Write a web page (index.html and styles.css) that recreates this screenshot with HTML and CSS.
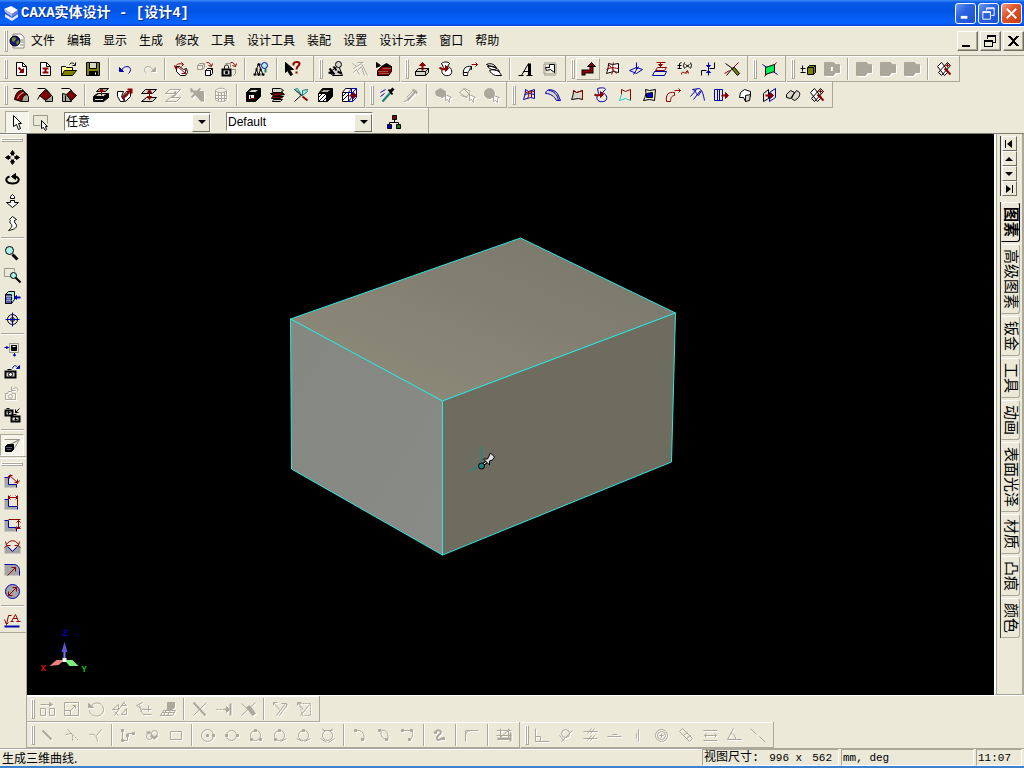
FILE: index.html
```html
<!DOCTYPE html>
<html lang="zh-CN">

<head>
    <meta charset="UTF-8">
    <meta name="viewport" content="width=device-width, initial-scale=1.0">
    <title>CAXA实体设计 - [设计4]</title>
    <link rel="stylesheet" href="styles.css">
</head>

<body>
    <!-- 标题栏 -->
    <header class="title">
        <svg class="logo" viewBox="0 0 16 16"><path fill="#fff" d="M1 4l7-3 7 4-6 4z"/><path fill="#b9b6ee" d="M1 4l8 5v3L2 7z"/><path fill="#7d78d8" d="M9 9l6-4v3l-6 4z"/><path fill="#e9e6ff" d="M2 9l7 4 6-4v3l-6 4-7-4z"/></svg>
        <h1>CAXA实体设计 - [设计4]</h1>
        <div class="winbtns">
            <button class="winbtn" aria-label="最小化"><svg viewBox="0 0 20 20"><path stroke-width="3" d="M5 14h7"/></svg></button>
            <button class="winbtn" aria-label="还原"><svg viewBox="0 0 20 20"><path d="M8 7V4h8v8h-3M8 5h8M4 8h8v8H4zM4 9h8"/></svg></button>
            <button class="winbtn close" aria-label="关闭"><svg viewBox="0 0 20 20"><path stroke-width="2" d="M5 5l10 10M15 5L5 15"/></svg></button>
        </div>
    </header>

    <!-- 菜单栏 -->
    <nav class="menu">
        <i class="grip"></i>
        <svg class="doc" viewBox="0 0 16 16"><path fill="#fff" stroke="#888" d="M4 1h8l3 3v11H4z"/><path stroke="#777" d="M12 7h2M12 9h2M11 12h3"/><circle cx="6" cy="8" r="5" fill="#17177c" stroke="#000"/><path fill="#7a8c1c" d="M3 5l3-1 1 2-2 3-2-1zM7 9l3-2v3l-2 2z"/></svg>
        <button>文件</button>
        <button>编辑</button>
        <button>显示</button>
        <button>生成</button>
        <button>修改</button>
        <button>工具</button>
        <button>设计工具</button>
        <button>装配</button>
        <button>设置</button>
        <button>设计元素</button>
        <button>窗口</button>
        <button>帮助</button>
        <div class="docbtns">
            <button aria-label="最小化文档"><svg viewBox="0 0 18 16"><path stroke-width="2" d="M4 13h8"/></svg></button>
            <button aria-label="还原文档"><svg viewBox="0 0 18 16"><path d="M6 6V2h8v7h-3M6 3h8M3 7h8v6H3zM3 8h8"/></svg></button>
            <button aria-label="关闭文档"><svg viewBox="0 0 18 16"><path stroke-width="2" d="M5 3l9 10M14 3L5 13"/></svg></button>
        </div>
    </nav>

    <!-- 工具条 第一行 -->
    <div class="bar">
        <div class="band wide">
            <i class="grip"></i>
            <button class="btn" aria-label="新建设计"><svg class="ico" viewBox="-.5 -.5 16 16"><path class="fw" d="M3 1h6l4 4v9H3z"/><path d="M9 1v4h4"/><path class="r" stroke-width="2" d="M5 6l4 4"/><path class="r fr" d="M10 7v4H6z"/></svg></button>
            <button class="btn" aria-label="新建图纸"><svg class="ico" viewBox="-.5 -.5 16 16"><path class="fw" d="M3 1h6l4 4v9H3z"/><path d="M9 1v4h4"/><path class="r" stroke-width="2" d="M5 7h6M8 7v4M5 11h6"/></svg></button>
            <button class="btn" aria-label="打开"><svg class="ico" viewBox="-.5 -.5 16 16"><path class="fy" d="M0 14V5h4l1 1h6v3"/><path class="fo" d="M0 14l3-5h12l-4 5z"/><path d="M8 3c1-2 4-2 5 0M14 1v3h-3"/></svg></button>
            <button class="btn" aria-label="保存"><svg class="ico" viewBox="-.5 -.5 16 16"><path class="fo" d="M1 1h13v13H1z"/><path class="fl" d="M4 1h7v6H4z"/><path class="fk" d="M4 10h8v4H4z"/><path stroke="#fff" d="M10 11v2"/></svg></button>
            <i class="sep"></i>
            <button class="btn" aria-label="撤销"><svg class="ico" viewBox="-.5 -.5 16 16"><path class="b" d="M4 9c2-5 9-5 9-1 0 2-1 3-2 4"/><path class="b fb" d="M2 6v4h4z"/></svg></button>
            <button class="btn" aria-label="重做" disabled><svg class="ico" viewBox="-.5 -.5 16 16"><path d="M12 9c-2-5-9-5-9-1 0 2 1 3 2 4"/><path class="fk" d="M14 6v4h-4z"/></svg></button>
            <i class="sep"></i>
            <button class="btn" aria-label="编辑零件"><svg class="ico" viewBox="-.5 -.5 16 16"><path class="fw" d="M3 5v5l4 4h5l2-3-1-4-3 1-4-3z"/><path class="r" d="M2 7c-1-4 4-6 8-4M4 5l8 7M8 12h4V8M1 4l1 3 3-1M8 1l2 2-2 2"/></svg></button>
            <button class="btn" aria-label="装配"><svg class="ico" viewBox="-.5 -.5 16 16"><path class="g" d="M0 4l2-2h5v4L5 8H0zM0 4h5v4M5 4l2-2"/><path class="fw" d="M8 9l2-2h5v5l-2 2H8z"/><path d="M8 9h5v5M13 9l2-2"/><path class="r" d="M9 1c3 0 4 1 5 4M11 4l3 1 1-3"/></svg></button>
            <button class="btn" aria-label="锁定"><svg class="ico" viewBox="-.5 -.5 16 16"><path class="g" d="M4 2h5v4M10 8h4v4l-2 2"/><path class="r" d="M9 1c3 0 4 1 5 4M11 4l3 1 1-3"/><path class="fl" stroke-width="2" d="M1 8h8v6H1z"/><path d="M3 7V5c0-2 4-2 4 0v2"/><path class="fk" d="M4 10h2v2H4z"/></svg></button>
            <i class="sep"></i>
            <button class="btn" aria-label="查找"><svg class="ico" viewBox="-.5 -.5 16 16"><path d="M5 2L1 14M5 2l5 12M3 8l2 6M7 8l-2 6"/><path d="M4 3h3M2 8h2M6 8h2M0 13h3M4 13h3M8 13h3" stroke-width="2"/><circle class="ft b" cx="11" cy="4" r="3"/><path class="t" stroke-width="2" d="M12 7v4"/></svg></button>
            <i class="sep"></i>
            <button class="btn" aria-label="帮助"><svg class="ico" viewBox="-.5 -.5 16 16"><path class="fk" d="M0 1v10l2-2 3 5 2-1-3-5h4z"/><path class="r" stroke-width="2" d="M8 4V2c1-2 6-2 6 0 0 3-3 2-3 6M11 10v2"/></svg></button>
        </div>
        <div class="band">
            <i class="grip"></i>
            <button class="btn" aria-label="智能渲染"><svg class="ico" viewBox="-.5 -.5 16 16"><path class="fl" d="M2 10l8-6 4 10H4z"/><circle class="fl" cx="10" cy="3" r="3"/><path stroke-width="2" d="M1 7l5 6M5 5l3 4M0 11l4 1M9 10l4 2"/></svg></button>
            <button class="btn" aria-label="渲染向导" disabled><svg class="ico" viewBox="-.5 -.5 16 16"><path d="M0 2l4 3M5 1h6M1 7l8-5 6 12M5 9l4-4 3 9M1 11l3-3 3 5"/></svg></button>
            <button class="btn" aria-label="材质库"><svg class="ico" viewBox="-.5 -.5 16 16"><path class="fr" d="M1 9l4-4h10v5l-3 4H1z"/><path class="fk" d="M0 1l4 3-4 2zM5 5l5-3 5 3z"/><path stroke="#c99" stroke-dasharray="1 1" d="M2 10h10M3 12h9M7 7h7"/></svg></button>
        </div>
        <div class="band">
            <i class="grip"></i>
            <button class="btn" aria-label="拉伸"><svg class="ico" viewBox="-.5 -.5 16 16"><path class="fl" d="M1 10l3-3h10v4l-3 3H1z"/><path d="M1 10h10v4M11 10l3-3"/><path class="r fr" d="M5 4l3-3 3 3z"/><path class="r" stroke-width="2" d="M8 4v5"/></svg></button>
            <button class="btn" aria-label="旋转"><svg class="ico" viewBox="-.5 -.5 16 16"><path class="fw" d="M3 2c2-2 7-2 8 0L9 5c5 1 6 8 1 9-5 1-8-3-6-7l1-1z"/><path class="r" stroke-width="2" d="M1 6c2 2 5 2 7 1"/><path class="r fr" d="M7 4l3 3-3 3z"/></svg></button>
            <button class="btn" aria-label="扫描"><svg class="ico" viewBox="-.5 -.5 16 16"><path class="fw" d="M1 14c-1-7 2-10 8-9v3c-3 0-4 3-4 6z"/><path d="M1 11h4M9 5l-2 3"/><path class="r" d="M9 3h6M13 1l2 2-2 2"/></svg></button>
            <button class="btn" aria-label="放样"><svg class="ico" viewBox="-.5 -.5 16 16"><path class="fw" d="M0 3c4-2 9 0 10 4-3-2-7-2-10-4zM1 5c5-1 9 0 12 5-4-2-9-1-12-5zM3 9c5-2 9-1 12 5H9c-3-1-5-3-6-5z"/></svg></button>
            <i class="sep"></i>
            <button class="btn" aria-label="文字"><svg class="ico" viewBox="-.5 -.5 16 16"><path d="M3 14l7-12M5 10h5M0 14h5M8 14h6"/><path stroke-width="3" d="M11 2v12"/></svg></button>
            <button class="btn" aria-label="轮廓"><svg class="ico" viewBox="-.5 -.5 16 16"><path class="g" stroke-width="3" stroke-dasharray="1 1" d="M2 2h11v11H2z"/><path class="fw" d="M3 6h4V3h5v8L8 8l-4 1z"/></svg></button>
        </div>
        <div class="band">
            <i class="grip"></i>
            <button class="btn up" aria-label="三维曲线"><svg class="ico" viewBox="-.5 -.5 16 16"><path stroke-width="4" d="M3 14v-4h8V5"/><path class="r" stroke-width="2" d="M3 13v-3h8V5"/><path class="fr" d="M7 5l4-4 4 4z"/></svg></button>
            <button class="btn" aria-label="曲面曲线"><svg class="ico" viewBox="-.5 -.5 16 16"><path class="fw" d="M4 2l4 1 6-1v9l-5-1-7 2c1-3 2-6 2-10z"/><path class="r" d="M9 1c-2 4 1 7-2 12M2 8l5-2 7 1M4 3l8 9"/></svg></button>
            <button class="btn" aria-label="投影曲线"><svg class="ico" viewBox="-.5 -.5 16 16"><path class="b" d="M8 1v7M1 9l7-3 6 2-6 4zM5 13l5-8"/></svg></button>
            <button class="btn" aria-label="等参数线"><svg class="ico" viewBox="-.5 -.5 16 16"><path class="r" d="M4 1h9M8 1v4M5 6h9l-2 3H3z"/><path class="r fr" d="M6 3h4L8 5z"/><path class="b" d="M2 10l-2 4h12l2-4z"/></svg></button>
            <button class="btn" aria-label="公式曲线"><svg class="ico" viewBox="-.5 -.5 16 16"><path d="M3 7V2l2-1M1 4h4M1 7h4M8 1L7 4l1 3M14 1l1 3-1 3M9 3l4 3M13 3L9 6"/><path class="r" d="M5 13c0-6 5 2 6-3M9 11l2-2 1 3"/></svg></button>
            <button class="btn" aria-label="组合曲线"><svg class="ico" viewBox="-.5 -.5 16 16"><path d="M1 14V9h5M9 7h5V1"/><path class="b" d="M8 1v13"/><path class="b fb" d="M6 4h4L8 6zM6 11h4l-2-2z"/></svg></button>
            <button class="btn" aria-label="裁剪曲线"><svg class="ico" viewBox="-.5 -.5 16 16"><path d="M1 2l14 10M2 14l5-6"/><path class="r" d="M7 8l7-7M0 12l5-3"/><path class="fo" d="M7 7l3-1 5 6-2 2z"/></svg></button>
        </div>
        <div class="band">
            <i class="grip"></i>
            <button class="btn" aria-label="基准面"><svg class="ico" viewBox="-.5 -.5 16 16"><path class="b" d="M0 3l15 10"/><path class="r" d="M2 15L14 1"/><path fill="#0e5" d="M3 6l9-3v7l-9 3z"/></svg></button>
        </div>
        <div class="band">
            <i class="grip"></i>
            <button class="btn" aria-label="布尔运算"><svg class="ico" viewBox="-.5 -.5 16 16"><path d="M0 7h5M2 4v6M0 11h5"/><path class="fo" d="M7 6l2-2h6v7l-2 2H7z"/><path d="M7 6h6v7M13 6l2-2"/></svg></button>
            <button class="btn" aria-label="相减" disabled><svg class="ico" viewBox="-.5 -.5 16 16"><path class="fk" fill-rule="evenodd" d="M0 1h9l2 2h4v8h-4l-2 3H0zM6 5v5h3V5z"/></svg></button>
            <i class="sep"></i>
            <button class="btn" aria-label="并集" disabled><svg class="ico" viewBox="-.5 -.5 16 16"><path class="fk" d="M0 1h10l2 2h3v8h-4l-2 3H0z"/></svg></button>
            <button class="btn" aria-label="交集" disabled><svg class="ico" viewBox="-.5 -.5 16 16"><path class="fk" d="M0 1h10l2 2h3v8h-4l-2 3H0z"/></svg></button>
            <button class="btn" aria-label="差集" disabled><svg class="ico" viewBox="-.5 -.5 16 16"><path class="fk" d="M0 1h10l2 2h3v8h-4l-2 3H0z"/></svg></button>
            <i class="sep"></i>
            <button class="btn" aria-label="特征识别"><svg class="ico" viewBox="-.5 -.5 16 16"><path class="fw" d="M1 5l4-4 7 9-4 4z"/><path d="M2 11l9-10 3 3L5 14z"/><path class="r" d="M9 4h4M11 2v4"/><path class="r" stroke-width="2" d="M8 7l6 6"/></svg></button>
        </div>
    </div>

    <!-- 工具条 第二行 -->
    <div class="bar">
        <div class="band">
            <i class="grip"></i>
            <button class="btn" aria-label="圆角过渡"><svg class="ico" viewBox="-.5 -.5 16 16"><path class="fg" d="M9 2l6 7v5H8z"/><path class="fr" d="M1 12c1-5 3-9 7-9l6 4c-4 0-5 3-6 7z"/><path d="M0 1h8"/><path stroke="#f0d0c8" d="M4 11c1-3 3-5 6-6"/></svg></button>
            <button class="btn" aria-label="倒角"><svg class="ico" viewBox="-.5 -.5 16 16"><path class="fg" d="M9 2l6 7v5H8z"/><path class="fr" d="M2 8l6-6 6 6-6 5z"/><path d="M0 1h8M0 12l3-5"/></svg></button>
            <button class="btn" aria-label="面拔模"><svg class="ico" viewBox="-.5 -.5 16 16"><path class="fg" d="M1 6l4 1 5 7H1z"/><path class="fr" d="M5 7l4-4 6 5-5 5z"/><path d="M0 1h8l3 3M4 8v6"/></svg></button>
            <i class="sep"></i>
            <button class="btn" aria-label="拉伸面"><svg class="ico" viewBox="-.5 -.5 16 16"><path class="fk" d="M0 9l4-3h11v4l-5 4H0z"/><path class="fl" d="M1 9l4-3h9l-4 3zM1 11h9v2H1z"/><path class="fg" d="M3 4l3-3h9l-3 3z"/><path class="r" d="M8 2v6"/><path class="r fr" d="M6 4l2-3 2 3z"/></svg></button>
            <button class="btn" aria-label="移动面"><svg class="ico" viewBox="-.5 -.5 16 16"><path class="fw" d="M0 4h6l-2 5 3 5H3L0 9zM5 9l4-5h4v5l-5 5z"/><path stroke-dasharray="1 1" d="M6 9l5-4M7 11l5-5"/><path class="r" stroke-width="2" d="M5 11l9-9M10 2h4v4"/></svg></button>
            <button class="btn" aria-label="匹配面"><svg class="ico" viewBox="-.5 -.5 16 16"><path class="fl" d="M4 2h11l-4 4H0zM5 10h10l-4 4H0z"/><path class="r" d="M8 2v10"/><path class="r fr" d="M6 5l2-3 2 3zM6 9l2 3 2-3z"/></svg></button>
            <button class="btn" aria-label="偏移面" disabled><svg class="ico" viewBox="-.5 -.5 16 16"><path d="M4 2h11l-4 4H0zM5 10h10l-4 4H0z"/><path stroke-width="2" d="M9 4c3 2 0 5-3 5"/></svg></button>
            <button class="btn" aria-label="删除面" disabled><svg class="ico" viewBox="-.5 -.5 16 16"><path class="fk" d="M8 4h6v10L8 9z"/><path stroke-width="2" d="M1 1l12 13M11 1L2 10M1 4h6"/></svg></button>
            <button class="btn" aria-label="编辑半径" disabled><svg class="ico" viewBox="-.5 -.5 16 16"><path d="M2 3c2-3 9-3 11 0v9c-2 3-9 3-11 0zM2 3c2 3 9 3 11 0M5 5v9M8 5v9M11 5v9M2 8h11M2 11h11"/></svg></button>
            <i class="sep"></i>
            <button class="btn" aria-label="抽壳"><svg class="ico" viewBox="-.5 -.5 16 16"><path class="fk" d="M1 5l4-4h10v8l-5 5H1z"/><path class="fl" d="M2 5l4-3h8l-4 3z"/><path class="fw" d="M3 7h6v5H3z"/><path class="r" d="M5 8v3h4"/></svg></button>
            <button class="btn" aria-label="分割"><svg class="ico" viewBox="-.5 -.5 16 16"><path class="fl" d="M3 1h8l3 2-3 2H3z"/><path class="fr" d="M1 6l12-1 2 2L5 9zM3 9h11l-3 2H2z"/><path class="fl" d="M4 12h9l-2 2H3z"/></svg></button>
            <button class="btn" aria-label="裁剪"><svg class="ico" viewBox="-.5 -.5 16 16"><path d="M1 14L14 2M1 2l7 6"/><path class="t ft" d="M9 3l4-1 1 2-5 4zM1 2l3-1 3 5z"/><path class="r" stroke-width="2" d="M9 9l5 4"/></svg></button>
            <button class="btn" aria-label="截面"><svg class="ico" viewBox="-.5 -.5 16 16"><path class="fk" d="M1 6l4-5h10v8l-5 5H1z"/><path class="fg" d="M2 5l4-3h8l-4 3z"/><path class="fw" d="M1 6h8v8H1z"/><path d="M1 10l4-4M1 14l8-8M5 14l4-4"/></svg></button>
            <button class="btn" aria-label="拉伸零件"><svg class="ico" viewBox="-.5 -.5 16 16"><path class="fw" d="M1 5l3-4h6v9l-3 4H1z"/><path d="M1 5h6v9M1 9l4-4M1 13l6-6"/><path class="b" d="M7 5l3-4h5v9l-4 4H7zM7 5h4v9M11 5l4-4"/><path class="r" stroke-width="2" d="M8 8h5"/><path class="r fr" d="M12 5l3 3-3 3z"/></svg></button>
        </div>
        <div class="band">
            <i class="grip"></i>
            <button class="btn" aria-label="提取效果"><svg class="ico" viewBox="-.5 -.5 16 16"><path class="b" d="M1 5l5-3M1 9l4-3"/><path class="t" d="M3 14l8-9" stroke-width="2"/><path stroke-width="3" d="M11 4l3-3"/><path stroke-width="2" d="M9 2l4 5"/></svg></button>
            <button class="btn" aria-label="应用效果" disabled><svg class="ico" viewBox="-.5 -.5 16 16"><path d="M3 10l8-8M0 14l4-1 1-3"/><path stroke-width="2" d="M9 2l5 4M4 13l9-10"/></svg></button>
            <i class="sep"></i>
            <button class="btn" aria-label="选择零件" disabled><svg class="ico" viewBox="-.5 -.5 16 16"><path class="fk" d="M0 4l5-3 5 3v4l-3 2-6-2z"/><path class="fw" d="M10 7v6l2-1 2 3v-4l2-1z"/></svg></button>
            <button class="btn" aria-label="选择面" disabled><svg class="ico" viewBox="-.5 -.5 16 16"><path d="M0 5l5-4 6 3-4 6zM4 1l7 7M1 8l7 2"/><path class="fw" d="M10 7v6l2-1 2 3v-4l2-1z"/></svg></button>
            <button class="btn" aria-label="选择体" disabled><svg class="ico" viewBox="-.5 -.5 16 16"><circle class="fk" cx="6" cy="6" r="5"/><path class="fw" d="M10 8v6l2-1 2 2v-4l2-1z"/></svg></button>
        </div>
        <div class="band">
            <i class="grip"></i>
            <button class="btn" aria-label="网格面"><svg class="ico" viewBox="-.5 -.5 16 16"><path class="b" d="M4 2l3 2 6-2v9l-4-1-7 2c1-3 2-6 2-10zM3 7l5-1 5 1"/><path class="r" d="M7 4c1 2 0 5-1 7M10 3v7M4 5l9-1"/></svg></button>
            <button class="btn" aria-label="放样面"><svg class="ico" viewBox="-.5 -.5 16 16"><path class="b fl" d="M0 6c1-6 9-4 12 0l3 7h-4C9 9 5 6 0 6z"/><path class="b" d="M3 3c5 0 9 4 10 10"/></svg></button>
            <button class="btn" aria-label="直纹面"><svg class="ico" viewBox="-.5 -.5 16 16"><path class="fl" d="M4 3l3 2 6-2v9l-4-1-7 1c1-2 2-6 2-9z"/><path class="r" d="M4 3l3 2 6-2v9"/></svg></button>
            <button class="btn" aria-label="旋转面"><svg class="ico" viewBox="-.5 -.5 16 16"><path class="b" d="M4 1c3-1 8-1 8 1l-3 3c5 2 6 8 1 9-5 1-8-2-6-6l1-2z"/><path class="r" stroke-width="2" d="M1 7c2 1 5 1 6 0"/><path class="r fr" d="M7 4l3 3-3 3z"/></svg></button>
            <button class="btn" aria-label="边界面"><svg class="ico" viewBox="-.5 -.5 16 16"><path class="r" d="M4 7V2l4 2 5-2v11"/><path stroke="#2cc" d="M4 7l-2 6 6-2 5 2"/></svg></button>
            <button class="btn" aria-label="补洞"><svg class="ico" viewBox="-.5 -.5 16 16"><path d="M4 2l4 1 6-1-1 11-5-1-6 1c2-4 3-7 2-11z"/><path class="fb" d="M5 6l6-1v5H5z"/></svg></button>
            <button class="btn" aria-label="导动面"><svg class="ico" viewBox="-.5 -.5 16 16"><path class="r" d="M1 14c-1-7 2-10 8-9v3c-3 0-4 3-4 6zM9 3h6M13 1l2 2-2 2"/></svg></button>
            <button class="btn" aria-label="曲面过渡"><svg class="ico" viewBox="-.5 -.5 16 16"><path class="b" d="M3 2l7-1c3 2 4 7 5 12M3 2c4 1 3 5 6 6M1 9l6-7M4 12l7-9M9 8l3-5"/></svg></button>
            <button class="btn" aria-label="曲面延伸"><svg class="ico" viewBox="-.5 -.5 16 16"><path class="b" d="M1 2h8v11H1zM4 2v11M6 2v11"/><path class="r" stroke-width="2" d="M8 8h4"/><path class="r fr" d="M12 5l3 3-3 3z"/></svg></button>
            <button class="btn" aria-label="偏移曲面"><svg class="ico" viewBox="-.5 -.5 16 16"><path class="fw" d="M3 5l4-3 6 2v5c-3 0-4 2-5 5l-2-4H2z"/><path class="fl" d="M8 8l5-1-1 6-4 1z"/></svg></button>
            <button class="btn" aria-label="缝合"><svg class="ico" viewBox="-.5 -.5 16 16"><path d="M2 6l5-4v9l-5 3z"/><path class="b" d="M8 5l6-4v9l-6 4z"/><path class="r" stroke-width="2" d="M4 8h5"/><path class="r fr" d="M9 5l3 3-3 3z"/></svg></button>
            <button class="btn" aria-label="合并曲面"><svg class="ico" viewBox="-.5 -.5 16 16"><path class="fl" d="M1 7l4-4 4 2-4 6-4-1zM8 7l3-4 3 2c1 3-1 6-5 8l-3-2z"/></svg></button>
            <button class="btn" aria-label="裁剪曲面"><svg class="ico" viewBox="-.5 -.5 16 16"><path class="fw" d="M1 5l4-4 7 9-4 4z"/><path d="M2 11l9-10 3 3L5 14z"/><path class="r" d="M9 4h4M11 2v4"/><path class="r" stroke-width="2" d="M8 7l6 6"/></svg></button>
        </div>
    </div>

    <!-- 选择过滤 -->
    <div class="bar">
        <div class="band filter">
            <button class="btn down" aria-label="选择"><svg class="ico" viewBox="-.5 -.5 16 16"><path class="fw" d="M4 1v11l3-2 2 5 2-1-2-5h3z"/></svg></button>
            <button class="btn" aria-label="框选"><svg class="ico" viewBox="-.5 -.5 16 16"><path class="g" d="M7 11H0V1h14v8"/><path class="fw" d="M8 6v8l2-1 2 3 1-1-1-3h2z"/></svg></button>
            <label class="combo">
                <select aria-label="选择过滤">
                    <option>任意</option>
                </select>
            </label>
            <label class="combo">
                <select aria-label="配置">
                    <option>Default</option>
                </select>
            </label>
            <button class="btn" aria-label="配置管理"><svg class="ico" viewBox="-.5 -.5 16 16"><path d="M8 5v3M3 11V8h9v3"/><path class="fr" d="M6 1h4v4H6z"/><path class="fb" d="M1 10h4v4H1z"/><path fill="#1a7a1a" d="M10 10h4v4h-4z"/></svg></button>
        </div>
    </div>

    <main class="main">
        <!-- 左侧工具条 -->
        <aside class="side">
            <div class="vband">
                <i class="grip"></i>
                <button class="btn" aria-label="平移"><svg class="ico" viewBox="-.5 -.5 16 16"><path class="fk" d="M8 1l2 3H6zM8 15l2-3H6zM1 8l3-2v4zM15 8l-3-2v4z"/><path stroke-width="3" d="M8 4v2M8 10v2M4 8h2M10 8h2"/></svg></button>
                <button class="btn" aria-label="旋转视图"><svg class="ico" viewBox="-.5 -.5 16 16"><path stroke-width="2" d="M5 5C-1 7 2 12 8 12s9-5 3-7"/><path class="fk" d="M7 5l4-3v6z"/></svg></button>
                <button class="btn" aria-label="前后缩放"><svg class="ico" viewBox="-.5 -.5 16 16"><path class="fw" d="M6 5V3l2-2 2 2v2zM6 7h4v2h4l-6 5-6-5h4z"/></svg></button>
                <button class="btn" aria-label="任意视向"><svg class="ico" viewBox="-.5 -.5 16 16"><path class="fw" d="M5 4l3-3 4 3-2 1c-1 2 2 3 2 5 0 3-3 4-8 5 3-3 4-4 3-6-2-2-2-3-1-4z"/></svg></button>
                <i class="sep"></i>
                <button class="btn" aria-label="动态缩放"><svg class="ico" viewBox="-.5 -.5 16 16"><circle class="ft" cx="5" cy="5" r="4"/><path stroke-width="3" d="M8 9l5 5"/></svg></button>
                <button class="btn" aria-label="窗口缩放"><svg class="ico" viewBox="-.5 -.5 16 16"><path class="g" d="M6 9H0V1h10v3"/><circle class="ft" cx="9" cy="8" r="3"/><path stroke-width="2" d="M11 10l5 5"/></svg></button>
                <button class="btn" aria-label="指定面"><svg class="ico" viewBox="-.5 -.5 16 16"><path class="ft" d="M1 5l3-3h6v8l-3 4H1z"/><path fill="#5560b0" d="M1 5h6v9H1z"/><path stroke="#cde" stroke-dasharray="1 1" d="M2 7h5M3 9h4M2 11h5"/><path class="b" stroke-width="2" d="M12 8h4"/><path class="b fb" d="M12 6v4l-2-2z"/></svg></button>
                <button class="btn" aria-label="指定中心"><svg class="ico" viewBox="-.5 -.5 16 16"><circle cx="8" cy="8" r="5"/><circle cx="8" cy="8" r="2"/><path class="b" d="M8 1v14M1 8h14"/></svg></button>
                <i class="sep"></i>
                <button class="btn" aria-label="全屏显示"><svg class="ico" viewBox="-.5 -.5 16 16"><path class="g" d="M5 2h9v9H5z"/><path class="fk" d="M7 4h5v5H7z"/><path stroke="#fff" d="M8 5h3"/><path class="b" d="M0 6h4M10 15v-3"/><path class="b fb" d="M2 5v2l2-1zM9 14h2l-1-2z"/></svg></button>
                <button class="btn" aria-label="保存视向"><svg class="ico" viewBox="-.5 -.5 16 16"><path class="fl" stroke-width="2" d="M1 8h10v6H1z"/><path d="M3 6h4"/><circle class="fw" cx="6" cy="11" r="2"/><path class="b" d="M8 5c1-4 4-3 5-1"/><path class="b fb" d="M15 2v3h-3z"/></svg></button>
                <button class="btn" aria-label="恢复视向" disabled><svg class="ico" viewBox="-.5 -.5 16 16"><path d="M1 8h2l1-2h3l1 2h3v6H1z"/><circle cx="6" cy="11" r="2"/><path d="M13 6c2-4-3-5-5-2M7 1v4h4"/></svg></button>
                <button class="btn" aria-label="取消视向"><svg class="ico" viewBox="-.5 -.5 16 16"><path class="fl" stroke-width="2" d="M1 3h7v5H1zM7 9h8v5H7z"/><path d="M2 1h3M9 7h3M4 4v3M3 5h3M11 10v3M10 12h3M11 5l4-4M11 2v3h3"/></svg></button>
                <i class="sep"></i>
                <button class="btn down" aria-label="透视"><svg class="ico" viewBox="-.5 -.5 16 16"><path class="g" d="M0 2h15L3 8M15 2L9 12M15 2L5 8"/><path class="fk" d="M1 9l2-2h6v5l-2 2H1z"/><path stroke="#aaf" stroke-dasharray="1 1" d="M2 10h5M3 12h4"/></svg></button>
            </div>
            <div class="vband">
                <i class="grip"></i>
                <button class="btn" aria-label="智能尺寸"><svg class="ico" viewBox="-.5 -.5 16 16"><path class="fd" d="M0 4h4v7h8v3H0z" stroke="none"/><path class="b" d="M0 4h4v7h8v3"/><path class="r" d="M5 2l8 7M5 5V2h3M10 9h3V6M3 4l3-3M12 11l3-4"/></svg></button>
                <button class="btn" aria-label="水平尺寸"><svg class="ico" viewBox="-.5 -.5 16 16"><path class="fd" d="M0 4h4v7h9v3H0z" stroke="none"/><path class="b" d="M0 4h4v7h9v3"/><path class="r" d="M4 0v5M13 0v11M4 2h9M6 0L4 2l2 2M11 0l2 2-2 2"/></svg></button>
                <button class="btn" aria-label="垂直尺寸"><svg class="ico" viewBox="-.5 -.5 16 16"><path class="fd" d="M0 3h4v7h8v4H0z" stroke="none"/><path class="b" d="M0 3h4v7h8v4"/><path class="r" d="M4 2h12M11 11h5M14 3v8M12 5l2-2 2 2M12 9l2 2 2-2"/></svg></button>
                <button class="btn" aria-label="角度尺寸"><svg class="ico" viewBox="-.5 -.5 16 16"><path class="fd" d="M0 7h4l4 4 4-4h4v7H0z" stroke="none"/><path class="b" d="M3 7l5 5 5-5"/><path class="r" d="M2 5c3-5 9-5 12 0M1 2l1 4h4M15 2l-1 4h-4M0 8l3-2M16 8l-3-2"/></svg></button>
                <button class="btn" aria-label="半径尺寸"><svg class="ico" viewBox="-.5 -.5 16 16"><path class="fd" d="M0 3h9c4 0 6 3 6 6v5H0z" stroke="none"/><path class="b" d="M0 3h9c4 0 6 3 6 6v5"/><path class="r" d="M3 14l8-8M7 6h4v4"/></svg></button>
                <button class="btn" aria-label="直径尺寸"><svg class="ico" viewBox="-.5 -.5 16 16"><circle class="fd b" cx="8" cy="8" r="7"/><path class="r" d="M4 12l8-8M8 4h4v4M4 8v4h4"/></svg></button>
                <i class="sep"></i>
                <button class="btn" aria-label="文字注释"><svg class="ico" viewBox="-.5 -.5 16 16"><path class="r" d="M7 8l4-7 3 7M6 8h3M12 8h4M9 5h4M7 2H4L2 11M0 6l2 5 2-2"/><path class="b" stroke-width="2" d="M0 13h15"/></svg></button>
            </div>
        </aside>

        <div class="center">
            <div class="work">
                <!-- 三维设计环境 -->
                <section class="canvas">
                    <svg viewBox="-.5 -.5 967 560">
                        <defs>
                            <linearGradient id="top" x1="0" y1="1" x2="1" y2="0">
                                <stop offset="0" stop-color="#918d7c"/>
                                <stop offset="1" stop-color="#77756a"/>
                            </linearGradient>
                            <linearGradient id="left" x1="0" y1="0" x2="1" y2="1">
                                <stop offset="0" stop-color="#858881"/>
                                <stop offset="1" stop-color="#888b86"/>
                            </linearGradient>
                        </defs>
                        <g class="box">
                            <path fill="url(#top)" d="M263 184l230-81 155 75-233 88z"/>
                            <path fill="url(#left)" d="M263 184l152 82v154l-151-86z"/>
                            <path fill="#6d6c5f" d="M415 266l233-88-4 149-229 93z"/>
                        </g>
                        <path class="axis" d="M454 312v18l-12 6"/>
                        <path stroke="#000" stroke-width="3" d="M459 327l-4 3"/>
                        <path stroke="#fff" d="M459 327l-4 3"/>
                        <path fill="#ddd" stroke="#000" d="M463 318l4 4-2 3-3 1v4l-6-6h4z"/>
                        <circle cx="454" cy="331" r="3" fill="#1c7f80" stroke="#000"/>
                        <!-- 坐标系 -->
                        <path stroke="#7a78e8" stroke-width="2" d="M37 526v-10"/>
                        <path fill="#5a58d8" d="M34 517l3-10 3 10z"/>
                        <path fill="#f08080" d="M37 525l-6 5-9 1 7-6z"/>
                        <path fill="#7cf07c" d="M37 525l8 0 6 6-9 0z"/>
                        <path fill="#fff" d="M35 523h4v4h-4z"/>
                        <text x="35" y="501" fill="#0000c8">Z</text>
                        <text x="13" y="536" fill="#e01010">X</text>
                        <text x="54" y="537" fill="#10c010">Y</text>
                    </svg>
                </section>

                <!-- 设计元素库 -->
                <aside class="catalog">
                    <div class="scroll">
                        <button aria-label="第一个"><svg viewBox="0 0 12 12"><path d="M2 2h1v8H2zM9 2v8L4 6z"/></svg></button>
                        <button aria-label="上一个"><svg viewBox="0 0 12 12"><path d="M6 4l4 4H2z"/></svg></button>
                        <button aria-label="下一个"><svg viewBox="0 0 12 12"><path d="M2 4h8L6 8z"/></svg></button>
                        <button aria-label="最后一个"><svg viewBox="0 0 12 12"><path d="M9 2h1v8H9zM3 2v8l5-4z"/></svg></button>
                    </div>
                    <div class="tabs">
                        <button class="sel">图素</button>
                        <button>高级图素</button>
                        <button>钣金</button>
                        <button>工具</button>
                        <button>动画</button>
                        <button>表面光泽</button>
                        <button>材质</button>
                        <button>凸痕</button>
                        <button>颜色</button>
                    </div>
                </aside>
            </div>

            <!-- 二维编辑 -->
            <div class="bar">
                <div class="band">
                    <i class="grip"></i>
                    <button class="btn" aria-label="平移曲线" disabled><svg class="ico" viewBox="-.5 -.5 16 16"><path d="M0 7h5v7H0zM9 7h5v7H9zM0 3h10"/><path class="fk" d="M9 1l3 2-3 2z"/></svg></button>
                    <button class="btn" aria-label="缩放曲线" disabled><svg class="ico" viewBox="-.5 -.5 16 16"><path d="M0 1h14v13H0zM0 9h6v5M5 10l6-6M8 4h3v3"/></svg></button>
                    <button class="btn" aria-label="旋转曲线" disabled><svg class="ico" viewBox="-.5 -.5 16 16"><path d="M3 4c5-5 12-2 12 4 0 8-13 9-14 1"/><path class="fk" d="M0 2v4h5z"/></svg></button>
                    <button class="btn" aria-label="镜像" disabled><svg class="ico" viewBox="-.5 -.5 16 16"><path d="M2 14L12 0M0 8l6-5v5zM9 13l5-6v6zM9 4h5M2 10l4 4M11 1l3 3"/></svg></button>
                    <button class="btn" aria-label="偏置" disabled><svg class="ico" viewBox="-.5 -.5 16 16"><path d="M0 4l6-3M0 4l5 3M3 4c1 4 2 6 4 9h8M4 10l3-3M7 8h8M12 4v6"/></svg></button>
                    <button class="btn" aria-label="投影" disabled><svg class="ico" viewBox="-.5 -.5 16 16"><path class="fk" d="M7 1h7v5l-2 2H7z"/><path d="M3 9h12l-3 5H0zM2 11h12M6 8l-3 6M10 9l-3 5"/></svg></button>
                    <i class="sep"></i>
                    <button class="btn" aria-label="打断" disabled><svg class="ico" viewBox="-.5 -.5 16 16"><path stroke-width="2" d="M1 1l12 13"/><path d="M14 1L1 14"/></svg></button>
                    <button class="btn" aria-label="延伸" disabled><svg class="ico" viewBox="-.5 -.5 16 16"><path stroke-dasharray="2 1" d="M0 8h8"/><path stroke-width="2" d="M8 8h3M14 2v12"/><path class="fk" d="M10 5l3 3-3 3z"/></svg></button>
                    <button class="btn" aria-label="裁剪线" disabled><svg class="ico" viewBox="-.5 -.5 16 16"><path d="M1 2l12 11M15 1L1 14"/><path class="fk" d="M6 6l3-2 6 8-3 2z"/></svg></button>
                    <i class="sep"></i>
                    <button class="btn" aria-label="显示尺寸" disabled><svg class="ico" viewBox="-.5 -.5 16 16"><path d="M1 1l6 7M1 4V1h4M4 14L13 2M7 14l8-11M9 2h5v4"/></svg></button>
                    <button class="btn" aria-label="显示约束" disabled><svg class="ico" viewBox="-.5 -.5 16 16"><path stroke-dasharray="2 1" d="M3 2h11v12H6z"/><path d="M1 1l6 7M1 4V1h4M4 14l9-11"/></svg></button>
                </div>
            </div>

            <!-- 二维绘图 -->
            <div class="bar">
                <div class="band">
                    <i class="grip"></i>
                    <button class="btn" aria-label="两点线" disabled><svg class="ico" viewBox="-.5 -.5 16 16"><path stroke-width="2" d="M2 3l9 9"/></svg></button>
                    <button class="btn" aria-label="切线" disabled><svg class="ico" viewBox="-.5 -.5 16 16"><path d="M3 2c4 3 6 6 5 11M1 7l6-1"/><path stroke-dasharray="2 1" d="M8 7l6 6"/></svg></button>
                    <button class="btn" aria-label="法线" disabled><svg class="ico" viewBox="-.5 -.5 16 16"><path d="M1 7c5-1 7 1 8 7M8 8l5-6"/></svg></button>
                    <i class="sep"></i>
                    <button class="btn" aria-label="连续直线" disabled><svg class="ico" viewBox="-.5 -.5 16 16"><path d="M2 3v10h5V6h6"/><path class="fk" d="M1 2h2v2H1zM1 12h2v2H1zM6 7h2v2H6zM12 5h2v2h-2z"/></svg></button>
                    <button class="btn" aria-label="轨迹" disabled><svg class="ico" viewBox="-.5 -.5 16 16"><circle cx="5" cy="9" r="3"/><circle cx="10" cy="6" r="3"/><path stroke-width="2" d="M2 5h4M6 8l4 3 3-3"/></svg></button>
                    <button class="btn" aria-label="矩形" disabled><svg class="ico" viewBox="-.5 -.5 16 16"><path d="M2 4h11v8H2z"/></svg></button>
                    <i class="sep"></i>
                    <button class="btn" aria-label="圆心半径" disabled><svg class="ico" viewBox="-.5 -.5 16 16"><circle cx="7" cy="8" r="6"/><path class="fk" d="M6 7h2v2H6zM12 7h2v2h-2z"/></svg></button>
                    <button class="btn" aria-label="两点圆" disabled><svg class="ico" viewBox="-.5 -.5 16 16"><circle cx="7" cy="8" r="5"/><path class="fk" d="M1 7h2v2H1zM12 7h2v2h-2z"/></svg></button>
                    <button class="btn" aria-label="三点圆" disabled><svg class="ico" viewBox="-.5 -.5 16 16"><circle cx="7" cy="8" r="5"/><path class="fk" d="M6 2h2v2H6zM2 11h2v2H2zM11 11h2v2h-2z"/></svg></button>
                    <button class="btn" aria-label="一切点圆" disabled><svg class="ico" viewBox="-.5 -.5 16 16"><circle cx="7" cy="8" r="5"/><path class="fk" d="M6 2h2v2H6zM2 11h2v2H2z"/><path d="M8 14l6-3"/></svg></button>
                    <button class="btn" aria-label="两切点圆" disabled><svg class="ico" viewBox="-.5 -.5 16 16"><circle cx="7" cy="8" r="5"/><path class="fk" d="M6 2h2v2H6z"/><path d="M0 11l6 3M8 14l6-3"/></svg></button>
                    <button class="btn" aria-label="三切点圆" disabled><svg class="ico" viewBox="-.5 -.5 16 16"><circle cx="7" cy="8" r="5"/><path d="M0 11l6 4M8 15l6-4M3 3h9M2 1l2 3M12 1l-2 3"/></svg></button>
                    <i class="sep"></i>
                    <button class="btn" aria-label="圆心圆弧" disabled><svg class="ico" viewBox="-.5 -.5 16 16"><path d="M3 3c7-1 10 4 8 10"/><path class="fk" d="M2 2h2v2H2zM9 11h2v2H9z"/></svg></button>
                    <button class="btn" aria-label="三点圆弧" disabled><svg class="ico" viewBox="-.5 -.5 16 16"><path d="M3 3c7-2 10 4 8 10M5 4c-2 4 2 8 6 8"/><path class="fk" d="M2 2h2v2H2zM9 11h2v2H9z"/></svg></button>
                    <button class="btn" aria-label="两端圆弧" disabled><svg class="ico" viewBox="-.5 -.5 16 16"><path d="M2 3h9c2 4 1 7-2 10"/><path class="fk" d="M1 2h2v2H1zM10 2h2v2h-2zM8 11h2v2H8z"/></svg></button>
                    <i class="sep"></i>
                    <button class="btn" aria-label="样条" disabled><svg class="ico" viewBox="-.5 -.5 16 16"><path stroke-width="2" d="M3 5c1-4 7-2 5 1-2 2-5 3-3 6 2 2 4-2 6-1"/><path class="fk" d="M2 4h2v2H2zM10 10h2v2h-2z"/></svg></button>
                    <i class="sep"></i>
                    <button class="btn" aria-label="过渡" disabled><svg class="ico" viewBox="-.5 -.5 16 16"><path d="M1 14V3h13M1 9c0-4 2-6 6-6"/></svg></button>
                    <i class="sep"></i>
                    <button class="btn" aria-label="构造" disabled><svg class="ico" viewBox="-.5 -.5 16 16"><path d="M0 3h15M4 1v9M12 1v9M0 8h15M4 10l9-8M1 12h12"/><path stroke-width="2" d="M1 11h13M14 5v9"/></svg></button>
                </div>
                <div class="band">
                    <i class="grip"></i>
                    <button class="btn" aria-label="垂直约束" disabled><svg class="ico" viewBox="-.5 -.5 16 16"><path d="M1 1v13h14M1 9h5v5"/></svg></button>
                    <button class="btn" aria-label="相切约束" disabled><svg class="ico" viewBox="-.5 -.5 16 16"><circle cx="7" cy="6" r="4"/><path d="M3 14L14 3M1 8l5 6"/></svg></button>
                    <button class="btn" aria-label="平行约束" disabled><svg class="ico" viewBox="-.5 -.5 16 16"><path d="M1 4h14M1 11h14M5 6l4-5M8 6l4-5M5 13l4-5M8 13l4-5"/></svg></button>
                    <button class="btn" aria-label="水平约束" disabled><svg class="ico" viewBox="-.5 -.5 16 16"><path d="M1 9h14M6 7h5"/></svg></button>
                    <button class="btn" aria-label="竖直约束" disabled><svg class="ico" viewBox="-.5 -.5 16 16"><path d="M8 2v12M6 6v5"/></svg></button>
                    <button class="btn" aria-label="同心约束" disabled><svg class="ico" viewBox="-.5 -.5 16 16"><circle cx="7" cy="8" r="6"/><circle cx="7" cy="8" r="4"/><path d="M5 8h4M7 6v4"/></svg></button>
                    <button class="btn" aria-label="尺寸约束" disabled><svg class="ico" viewBox="-.5 -.5 16 16"><path d="M1 4l3-3 10 10-3 3zM5 8l4-3M8 11l4-3"/></svg></button>
                    <button class="btn" aria-label="等长约束" disabled><svg class="ico" viewBox="-.5 -.5 16 16"><path d="M1 3h14M1 13h14M2 8h12M4 6L2 8l2 2M12 6l2 2-2 2"/></svg></button>
                    <button class="btn" aria-label="角度约束" disabled><svg class="ico" viewBox="-.5 -.5 16 16"><path d="M7 1L1 12h14M4 6c3 0 5 2 5 6"/></svg></button>
                    <button class="btn" aria-label="共线约束" disabled><svg class="ico" viewBox="-.5 -.5 16 16"><path d="M0 1l6 6M9 9l6 6"/></svg></button>
                </div>
            </div>
        </div>
    </main>

    <!-- 状态栏 -->
    <footer class="status">
        <p>生成三维曲线.</p>
        <div class="pane size"><span>视图尺寸:</span><span>996 x</span><span>562</span></div>
        <div class="pane unit">mm, deg</div>
        <div class="pane time">11:07</div>
    </footer>
</body>

</html>
```

FILE: styles.css
```css
* {
    box-sizing: border-box;
}

body {
    display: flex;
    flex-direction: column;
    height: 100vh;
    margin: 0;
    background: #ece9d8;
    border-bottom: 2px solid #3c82cc;
    font: 12px/16px "Liberation Sans", "Noto Sans CJK SC", sans-serif;
    color: #000;
}

button {
    padding: 0;
    border: 0;
    background: none;
    font: inherit;
    color: inherit;
}

/* 标题栏 */
.title {
    display: flex;
    align-items: center;
    height: 26px;
    padding: 0 2px 0 3px;
    background: linear-gradient(#3c8cf8 0, #0a5ae8 10%, #0054e3 40%, #0560fa 75%, #0463fc 90%, #0040c8 100%);
}

.title h1 {
    flex: 1;
    margin: 0 0 0 2px;
    font: bold 14px/20px "Liberation Mono", "Noto Sans CJK SC", monospace;
    color: #fff;
    text-shadow: 1px 1px 0 #0a2a80;
}

.logo {
    width: 16px;
    height: 16px;
}

.winbtns {
    display: flex;
    gap: 2px;
}

.winbtn {
    width: 21px;
    height: 21px;
    border: 1px solid #fff;
    border-radius: 3px;
    background: linear-gradient(135deg, #6f9bf5, #2a62e0 40%, #1c50d0);
}

.winbtn.close {
    background: linear-gradient(135deg, #f0a088, #e0552c 40%, #c83c14);
}

.winbtn svg {
    display: block;
    width: 100%;
    fill: none;
    stroke: #fff;
}

/* 菜单栏 */
.menu {
    display: flex;
    align-items: center;
    height: 30px;
    padding-left: 4px;
    border-bottom: 1px solid #aca899;
    box-shadow: inset 0 1px #fff;
}

.menu .grip {
    height: 22px;
}

.menu > button {
    padding: 0 6px;
}

.doc {
    width: 16px;
    height: 16px;
    fill: none;
}

.docbtns {
    display: flex;
    gap: 2px;
    margin-left: auto;
}

.docbtns button {
    width: 21px;
    height: 20px;
    border: 1px solid;
    border-color: #fff #716f64 #716f64 #fff;
    box-shadow: inset -1px -1px #aca899;
}

.docbtns svg {
    display: block;
    width: 18px;
    height: 16px;
    fill: none;
    stroke: #000;
    shape-rendering: crispEdges;
}

/* 工具条 */
.bar {
    display: flex;
    height: 26px;
}

.band {
    display: flex;
    align-items: center;
    padding: 0 3px 0 4px;
    border-right: 1px solid #aca899;
    border-bottom: 1px solid #aca899;
    box-shadow: inset 0 1px #fff;
    margin-right: 1px;
}

.band.wide {
    padding-right: 8px;
}

.grip {
    width: 4px;
    height: 20px;
    margin-right: 1px;
    border: 1px solid;
    border-color: #fff #aca899 #aca899 #fff;
    box-shadow: inset -1px 0 #fff, inset 1px 0 #aca899;
}

.sep {
    width: 2px;
    height: 22px;
    margin: 0 3px;
    border-left: 1px solid #aca899;
    border-right: 1px solid #fff;
}

.btn {
    display: flex;
    align-items: center;
    justify-content: center;
    width: 24px;
    height: 22px;
    border: 1px solid transparent;
}

.btn.up {
    border-color: #fff #aca899 #aca899 #fff;
}

.btn.down {
    border-color: #aca899 #fff #fff #aca899;
    background: #f5f3ea;
}

.ico {
    flex: none;
    width: 16px;
    height: 16px;
    overflow: visible;
    fill: none;
    stroke: #000;
}

.btn:disabled .ico {
    stroke: #aca899;
    filter: drop-shadow(1px 1px 0 #fff);
}

/* 线条颜色 */
.r { stroke: #900000; }
.b { stroke: #0000b0; }
.g { stroke: #99978a; }
.t { stroke: #108080; }

/* 填充颜色 */
.fk { fill: #000; }
.fr { fill: #800000; }
.fb { fill: #0000d0; }
.fg { fill: #a8a698; }
.fd { fill: #a5a5a5; }
.fl { fill: #d8d6c8; }
.fw { fill: #fff; }
.fo { fill: #808000; }
.fy { fill: #ffff90; }
.ft { fill: #a8f0e8; }

.btn:disabled .fk {
    fill: #aca899;
}

/* 选择过滤 */
.bar:has(.filter) {
    height: 25px;
}

.filter {
    padding: 2px 22px 0 5px;
    border-bottom: 0;
}

.combo {
    position: relative;
    width: 147px;
    margin-left: 11px;
    border: 1px solid;
    border-color: #808072 #fff #fff #808072;
    background: #fff;
}

.combo + .combo {
    margin-left: 15px;
}

.combo + .btn {
    margin-left: 9px;
}

.combo select {
    display: block;
    width: 100%;
    height: 17px;
    padding: 0 18px 0 1px;
    border: 0;
    appearance: none;
    background: #fff;
    font: inherit;
    line-height: 16px;
    color: #000;
}

.combo::before {
    content: "";
    position: absolute;
    top: 1px;
    right: 0;
    width: 16px;
    height: 16px;
    border: 1px solid;
    border-color: #fff #716f64 #716f64 #fff;
    background: #ece9d8;
    pointer-events: none;
}

.combo::after {
    content: "";
    position: absolute;
    top: 7px;
    right: 4px;
    border: 4px solid transparent;
    border-top-color: #000;
    border-bottom: 0;
    pointer-events: none;
}

/* 主区域 */
.main {
    display: flex;
    flex: 1;
    min-height: 0;
    border-top: 1px solid #808072;
    border-bottom: 1px solid #aca899;
}

.side {
    width: 27px;
    border-right: 1px solid #aca899;
}

.vband {
    display: flex;
    flex-direction: column;
    padding: 4px 2px 0 0;
    border-bottom: 1px solid #aca899;
    box-shadow: inset 0 1px #fff;
    margin-bottom: 1px;
}

.vband .grip {
    width: 22px;
    height: 4px;
    margin: 0 0 4px 1px;
    box-shadow: inset 0 -1px #fff, inset 0 1px #aca899;
}

.vband .sep {
    width: 23px;
    height: 2px;
    margin: 3px 0 3px 1px;
    border: 0;
    border-top: 1px solid #aca899;
    border-bottom: 1px solid #fff;
}

.center {
    display: flex;
    flex: 1;
    flex-direction: column;
    min-width: 0;
}

.work {
    display: flex;
    flex: 1;
    min-height: 0;
    border-bottom: 1px solid #fff;
}

.canvas {
    flex: 1;
    min-width: 0;
    background: #000;
}

.canvas svg {
    display: block;
    width: 100%;
    height: 100%;
}

.canvas text {
    font: bold 9px "Liberation Mono", monospace;
}

.box path {
    stroke: #2ee6e0;
    stroke-linejoin: round;
}

.axis {
    fill: none;
    stroke: #0c8c8e;
}

/* 设计元素库 */
.catalog {
    width: 30px;
    padding: 2px 3px 0 4px;
    border-left: 2px solid #fff;
    border-right: 2px solid #aca899;
    border-bottom: 1px solid #aca899;
    box-shadow: inset 1px 0 #aca899;
}

.scroll {
    display: flex;
    flex-direction: column;
    width: 17px;
    margin-bottom: 6px;
    padding-left: 1px;
    border-left: 1px solid #404040;
}

.scroll button {
    height: 15px;
    border: 1px solid;
    border-color: #fff #716f64 #716f64 #fff;
}

.scroll svg {
    display: block;
    width: 12px;
    height: 12px;
}

.tabs {
    display: flex;
    flex-direction: column;
    gap: 2px;
    border-left: 1px solid #404040;
}

.tabs button {
    width: 19px;
    padding: 4px 0;
    border: 1px solid;
    border-color: #fff #aca899 #aca899 transparent;
    border-radius: 0 3px 3px 0;
    font-size: 15px;
    line-height: 16px;
    writing-mode: vertical-rl;
    text-orientation: sideways;
    white-space: nowrap;
}

.tabs .sel {
    border-color: #fff #000 #000 transparent;
    font-weight: bold;
}

/* 状态栏 */
.status {
    display: flex;
    gap: 2px;
    height: 17px;
    padding-right: 2px;
    font: 12px/16px "Noto Sans CJK SC", sans-serif;
    box-shadow: inset 0 1px #fff;
}

.status p {
    flex: 1;
    margin: 1px 0 0 2px;
}

.pane {
    padding: 0 1px;
    border: 1px solid;
    border-color: #aca899 #fff #fff #aca899;
    font: 11px/16px "Liberation Mono", "Noto Sans CJK SC", monospace;
}

.size {
    display: flex;
    gap: 10px;
    width: 137px;
}

.size span:first-child {
    font-size: 12px;
}

.unit {
    width: 133px;
}

.time {
    width: 46px;
}
```
